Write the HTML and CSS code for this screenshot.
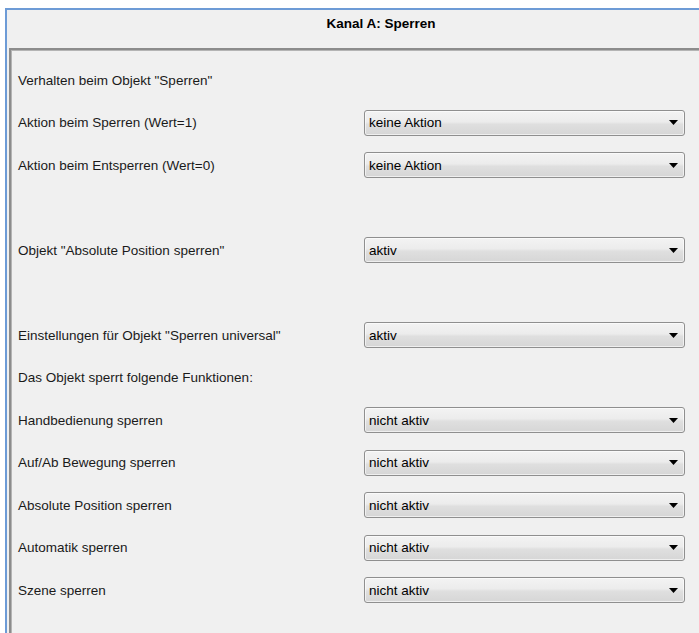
FILE: index.html
```html
<!DOCTYPE html>
<html lang="de">
<head>
<meta charset="utf-8">
<title>Kanal A: Sperren</title>
<link rel="stylesheet" href="styles.css">
</head>
<body>
<div class="window">
  <div class="title">Kanal A: Sperren</div>
  <div class="panel">
    <div class="row"><span class="label">Verhalten beim Objekt "Sperren"</span></div>
    <div class="row">
      <span class="label">Aktion beim Sperren (Wert=1)</span>
      <div class="combo"><span>keine Aktion</span><svg class="arrow" width="9" height="5" viewBox="0 0 9 5"><path d="M0 0H9L4.5 5Z"/></svg></div>
    </div>
    <div class="row">
      <span class="label">Aktion beim Entsperren (Wert=0)</span>
      <div class="combo"><span>keine Aktion</span><svg class="arrow" width="9" height="5" viewBox="0 0 9 5"><path d="M0 0H9L4.5 5Z"/></svg></div>
    </div>
    <div class="row"></div>
    <div class="row">
      <span class="label">Objekt "Absolute Position sperren"</span>
      <div class="combo"><span>aktiv</span><svg class="arrow" width="9" height="5" viewBox="0 0 9 5"><path d="M0 0H9L4.5 5Z"/></svg></div>
    </div>
    <div class="row"></div>
    <div class="row">
      <span class="label">Einstellungen für Objekt "Sperren universal"</span>
      <div class="combo"><span>aktiv</span><svg class="arrow" width="9" height="5" viewBox="0 0 9 5"><path d="M0 0H9L4.5 5Z"/></svg></div>
    </div>
    <div class="row"><span class="label">Das Objekt sperrt folgende Funktionen:</span></div>
    <div class="row">
      <span class="label">Handbedienung sperren</span>
      <div class="combo"><span>nicht aktiv</span><svg class="arrow" width="9" height="5" viewBox="0 0 9 5"><path d="M0 0H9L4.5 5Z"/></svg></div>
    </div>
    <div class="row">
      <span class="label">Auf/Ab Bewegung sperren</span>
      <div class="combo"><span>nicht aktiv</span><svg class="arrow" width="9" height="5" viewBox="0 0 9 5"><path d="M0 0H9L4.5 5Z"/></svg></div>
    </div>
    <div class="row">
      <span class="label">Absolute Position sperren</span>
      <div class="combo"><span>nicht aktiv</span><svg class="arrow" width="9" height="5" viewBox="0 0 9 5"><path d="M0 0H9L4.5 5Z"/></svg></div>
    </div>
    <div class="row">
      <span class="label">Automatik sperren</span>
      <div class="combo"><span>nicht aktiv</span><svg class="arrow" width="9" height="5" viewBox="0 0 9 5"><path d="M0 0H9L4.5 5Z"/></svg></div>
    </div>
    <div class="row">
      <span class="label">Szene sperren</span>
      <div class="combo"><span>nicht aktiv</span><svg class="arrow" width="9" height="5" viewBox="0 0 9 5"><path d="M0 0H9L4.5 5Z"/></svg></div>
    </div>
  </div>
</div>
</body>
</html>
```

FILE: styles.css
```css
html, body {
  margin: 0;
  padding: 0;
  background: #ffffff;
  overflow: hidden;
  height: 100%;
}

body {
  box-sizing: border-box;
  padding: 8px 0 0 5px;
  font-family: "Liberation Sans", Arial, sans-serif;
  font-size: 13.5px;
  color: #1a1a1a;
}

/* dialog frame: blue edge on top and left, continues past the right and bottom edges */
.window {
  box-sizing: border-box;
  height: 100%;
  background: #f0f0f0;
  border-top: 2px solid #6d9bd6;
  border-left: 2px solid #6d9bd6;
  display: flex;
  flex-direction: column;
}

/* the caption is centred over the full dialog width, wider than the visible part */
.title {
  height: 38px;
  box-sizing: border-box;
  padding: 6px 0 0 56px;
  text-align: center;
  font-weight: bold;
  font-size: 13.5px;
  color: #000;
}

/* sunken parameter area */
.panel {
  flex: 1;
  margin-left: 2px;
  border-top: 2px solid #8c8c8c;
  border-left: 2px solid #8c8c8c;
  box-shadow: inset 1px 1px 0 #b4b4b4;
  padding: 9px 0 0 7px;
}

.row {
  height: 42.5px;
  display: grid;
  grid-template-columns: 346px 321px;
  align-items: center;
}

.label {
  white-space: nowrap;
}

.combo {
  height: 26px;
  box-sizing: border-box;
  border: 1px solid #8f8f8f;
  border-radius: 3px;
  background: linear-gradient(#f3f3f3 0%, #ececec 45%, #dfdfdf 55%, #d6d6d6 100%);
  box-shadow: inset 0 0 0 1px rgba(255, 255, 255, 0.6);
  display: flex;
  align-items: center;
  justify-content: space-between;
  padding: 0 6px 0 4px;
  color: #000;
}

.arrow {
  fill: #000;
  display: block;
}
```
